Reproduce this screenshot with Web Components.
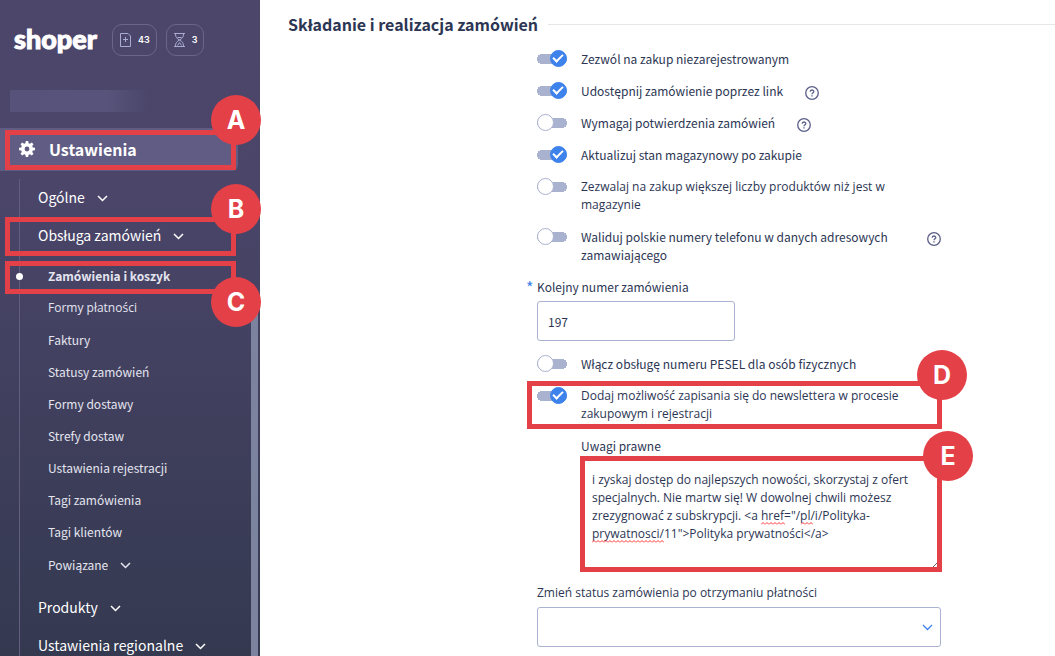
<!DOCTYPE html>
<html lang="pl">
<head>
<meta charset="utf-8">
<title>Składanie i realizacja zamówień</title>
<style>
  body { margin: 0; font-family: "Noto Sans CJK SC", "Noto Sans", sans-serif; font-size: 12px; line-height: 18px; color: #2c3654; background: #fff; }
  .pl { font-family: "Open Sans", sans-serif; }
</style>
</head>
<body>
<app-shell>
  <side-bar slot="side">
    <callout-mark letter="A" style="--frame: 2px 2px 1px 5px; --badge-top: -40px">
      <nav-item level="0">Ustawienia</nav-item>
    </callout-mark>
    <nav-tree>
      <nav-item level="1" expandable>Ogólne</nav-item>
      <callout-mark letter="B" style="--frame: 1px 2px -2px 5px; --badge-top: -38px">
        <nav-item level="1" expandable>Obsługa zamówień</nav-item>
      </callout-mark>
      <nav-group>
        <callout-mark letter="C" style="--frame: 1px 2px -2px 5px; --badge-top: 11px">
          <nav-item level="2" current>Zamówienia i koszyk</nav-item>
        </callout-mark>
        <nav-item class="pl" level="2">Formy płatności</nav-item>
        <nav-item level="2">Faktury</nav-item>
        <nav-item level="2">Statusy zamówień</nav-item>
        <nav-item level="2">Formy dostawy</nav-item>
        <nav-item level="2">Strefy dostaw</nav-item>
        <nav-item level="2">Ustawienia rejestracji</nav-item>
        <nav-item level="2">Tagi zamówienia</nav-item>
        <nav-item level="2">Tagi klientów</nav-item>
        <nav-item level="2" expandable>Powiązane</nav-item>
      </nav-group>
      <nav-item level="1" expandable>Produkty</nav-item>
      <nav-item level="1" expandable>Ustawienia regionalne</nav-item>
    </nav-tree>
  </side-bar>
  <settings-section heading="Składanie i realizacja zamówień">
    <toggle-row checked>Zezwól na zakup niezarejestrowanym</toggle-row>
    <toggle-row checked help>Udostępnij zamówienie poprzez link</toggle-row>
    <toggle-row help>Wymagaj potwierdzenia zamówień</toggle-row>
    <toggle-row checked>Aktualizuj stan magazynowy po zakupie</toggle-row>
    <toggle-row class="pl">Zezwalaj na zakup większej liczby produktów niż jest w magazynie</toggle-row>
    <toggle-row help>Waliduj polskie numery telefonu w danych adresowych zamawiającego</toggle-row>
    <text-field value="197" required>Kolejny numer zamówienia</text-field>
    <toggle-row>Włącz obsługę numeru PESEL dla osób fizycznych</toggle-row>
    <callout-mark letter="D" style="--frame: -6px -1px -6px -10px; --badge-top: -36px">
      <toggle-row class="pl" checked>Dodaj możliwość zapisania się do newslettera w procesie zakupowym i rejestracji</toggle-row>
    </callout-mark>
    <note-field>Uwagi prawne</note-field>
    <select-field class="pl">Zmień status zamówienia po otrzymaniu płatności</select-field>
  </settings-section>
</app-shell>

<script>
const define = (name, css, render) => customElements.define(name, class extends HTMLElement {
  constructor() {
    super();
    this.attachShadow({ mode: "open" });
  }
  connectedCallback() {
    if (this.shadowRoot.childNodes.length) return;
    const t = document.createElement("template");
    t.innerHTML = `<style>*{box-sizing:border-box}${css}</style>${render(this)}`;
    this.shadowRoot.append(t.content.cloneNode(true));
  }
});

define("app-shell", `
  :host { display: grid; grid-template-columns: 260px minmax(0, 1fr); height: 100vh; overflow: hidden; }
  aside, main { min-width: 0; min-height: 0; }
  aside { position: relative; z-index: 1; }
  main { overflow: hidden; }
`, () => `<aside><slot name="side"></slot></aside><main><slot></slot></main>`);

define("side-bar", `
  :host { display: block; position: relative; height: 100vh; color: #fff;
    background: linear-gradient(#4c466b, #4a4569 30%, #343950); }
  header { display: flex; align-items: center; height: 56px; padding: 24px 0 0 14px; }
  .logo { font: 900 27px/32px Lato, sans-serif; color: #fff; text-decoration: none; flex: 0 0 98px; padding-bottom: 2px; -webkit-text-stroke: 1px #fff; }
  .pill { display: flex; align-items: center; gap: 6px; height: 32px; padding: 0 6px; margin-right: 9px;
    border: 1px solid #6b6688; border-radius: 10px; background: none; color: #fff; font: 600 9px/14px Inter, sans-serif; }
  .pill svg { width: 13px; height: 14px; fill: none; stroke: #a9abd0; }
  .shop { height: 22px; width: 138px; margin: 34px 0 16px 10px;
    background: linear-gradient(90deg, #57527a, #57537a 70%, #4b466a00); }
  .wrap { height: 100vh; clip-path: inset(0 -10px 0 0); }
  .bar { position: absolute; right: 2px; top: 300px; bottom: 0; width: 7px; background: #7b839f; }
`, () => `<div class="wrap"><header>
    <a class="logo" href="#">shoper</a>
    <button class="pill" aria-label="Nowe zamówienia"><svg viewBox="0 0 13 14"><path d="M1.500 .5h7.500l2.500 2.500v10.500h-10z"/><path d="M6.500 4v5M4 6.500h5"/></svg>43</button>
    <button class="pill" aria-label="Oczekujące"><svg viewBox="0 0 13 14"><path d="M1 .5h11M1 13.500h11M2.500 1c0 3.500 1.500 4.500 4 6c-2.500 1.500-4 2.500-4 6M10.500 1c0 3.500-1.500 4.500-4 6c2.500 1.500 4 2.500 4 6M4.500 12.500l2-3 2 3M4.500 4.500h4"/></svg>3</button>
  </header>
  <div class="shop"></div>
  <div class="bar"></div>
  <nav><slot></slot></nav></div>`);

define("nav-tree", `
  :host { display: block; position: relative; padding-top: 7px; }
  .line { position: absolute; left: 19px; top: 8px; bottom: 0; width: 1px; background: #625e7f; }
`, () => `<div class="line"></div><slot></slot>`);

define("nav-group", `:host { display: block; padding: 6px 0 7px; }`, () => `<slot></slot>`);

define("nav-item", `
  :host { display: block; width: 238px; }
  a { display: flex; align-items: center; gap: 12px; position: relative; color: #fff; text-decoration: none; white-space: nowrap; }
  .l0 { height: 43px; padding: 0 0 2px 19px; gap: 14px; font-size: 16px; font-weight: 700; background: #615c83; border-radius: 0 6px 6px 0; }
  .l1 { height: 38px; padding-left: 38px; font-size: 14px; }
  .l2 { height: 32px; padding-left: 48px; font-size: 12px; color: #e4e5ef; }
  .l2.current { font-weight: 700; }
  .l2.exp { height: 33px; }
  .l2.current::before { content: ""; position: absolute; left: 16px; width: 7px; height: 7px; border-radius: 50%; background: #fff; }
  .chev { width: 11px; height: 7px; fill: none; stroke: currentColor; stroke-width: 1.500; margin-top: 2px; }
  .gear { width: 16px; height: 16px; fill: #fff; }
`, el => {
  const level = el.getAttribute("level");
  const gear = `<svg class="gear" viewBox="0 0 16 16"><path fill-rule="evenodd" d="M6.800 0h2.400l.4 2.200 1.300.6 1.900-1.300 1.700 1.700-1.300 1.900.6 1.300 2.200.4v2.400l-2.200.4-.6 1.300 1.300 1.900-1.700 1.700-1.900-1.300-1.300.6-.4 2.200H6.800l-.4-2.200-1.300-.6-1.900 1.300-1.700-1.700 1.300-1.900-.6-1.300L0 9.200V6.800l2.200-.4.6-1.300L1.500 3.200l1.700-1.700 1.900 1.300 1.300-.6zM8 5.600a2.400 2.400 0 1 0 0 4.800a2.400 2.400 0 0 0 0-4.800z"/></svg>`;
  const chev = `<svg class="chev" viewBox="0 0 11 7"><path d="M1 1l4.500 4.500L10 1"/></svg>`;
  const exp = el.hasAttribute("expandable"), cur = el.hasAttribute("current");
  return `<a href="#" class="l${level}${exp ? " exp" : ""}${cur ? " current" : ""}">${level === "0" ? gear : ""}<span><slot></slot></span>${exp ? chev : ""}</a>`;
});

define("callout-mark", `
  :host { display: block; position: relative; }
  .frame { position: absolute; inset: var(--frame); border: 5px solid #e34047; pointer-events: none; z-index: 2; }
  .badge { position: absolute; top: var(--badge-top); right: var(--badge-right, -30px); width: 50px; height: 50px; border-radius: 50%;
    background: #e34047; color: #fff; font: 700 25px/50px Inter, sans-serif; text-align: center; }
  :host-context(side-bar) { width: 238px; }
`, el => `<slot></slot><div class="frame"><span class="badge">${el.getAttribute("letter")}</span></div>`);

define("settings-section", `
  :host { display: block; padding: 14px 0 0 28px; }
  h2 { display: flex; align-items: center; gap: 10px; margin: 0 0 16px; font-size: 16px; line-height: 20px; font-weight: 700; }
  h2::after { content: ""; flex: 1; height: 1px; background: #e6e7ea; }
  .fields { display: grid; gap: 14px; margin-left: 249px; max-width: 404px; }
`, el => `<h2>${el.getAttribute("heading")}</h2><div class="fields"><slot></slot></div>`);

define("toggle-row", `
  :host { display: flex; align-items: flex-start; gap: 22px; }
  label { display: flex; gap: 14px; min-width: 0; }
  input { appearance: none; position: relative; flex: none; width: 30px; height: 17px; margin: 0;
    background: radial-gradient(circle, #a9b2ce 5px, #a9b2ce00 5px) 0 4px / 10px 10px no-repeat,
      radial-gradient(circle, #a9b2ce 5px, #a9b2ce00 5px) 20px 4px / 10px 10px no-repeat,
      linear-gradient(#a9b2ce, #a9b2ce) 5px 4px / 20px 10px no-repeat; }
  input::before { content: ""; position: absolute; box-sizing: border-box; left: 0; top: 0; width: 17px; height: 17px; border-radius: 50%; background: #fff; border: 1px solid #a9b2ce; }
  input:checked::before { left: 13px; background: #3e82ec; border-color: #3e82ec; }
  input:checked::after { content: ""; position: absolute; box-sizing: content-box; left: 16px; top: 4px; width: 8px; height: 4px; border: solid #fff; border-width: 0 0 2px 2px; transform: rotate(-45deg); }
  button { flex: none; width: 14px; height: 14px; padding: 0; margin: 4px 0 0; border: 0; background: none; }
  svg { display: block; width: 14px; height: 14px; fill: none; stroke: #5b5f88; }
`, el => `<label><input type="checkbox"${el.hasAttribute("checked") ? " checked" : ""}><span><slot></slot></span></label>${
  el.hasAttribute("help") ? `<button aria-label="Pomoc"><svg viewBox="0 0 14 14"><circle cx="7" cy="7" r="6.300" stroke-width="1.300"/><path stroke-width="1.300" d="M5.200 5.800c0-2.400 3.600-2.300 3.600-.2c0 1.200-1.800 1.200-1.800 2.600M7 9.300v1.300"/></svg></button>` : ""}`);

const fieldCss = `
  :host { display: block; position: relative; }
  label { display: block; margin-bottom: 5px; }
  input, textarea, select { display: block; margin: 0; font: inherit; color: inherit; background: #fff; border: 1px solid #a9b2d0; border-radius: 3px; outline: 0; }
`;

define("text-field", fieldCss + `
  input { width: 198px; height: 40px; padding: 0 10px; }
  label::before { content: "*"; position: absolute; left: -11px; color: #3e82ec; font-size: 16px; }
`, el => `<label for="f"><slot></slot></label><input id="f" value="${el.getAttribute("value")}" required>`);

define("note-field", fieldCss + `
  :host { margin-left: 44px; }
  textarea { width: 100%; height: 110px; padding: 10px 10px 8px; resize: vertical; font-family: "Open Sans", sans-serif; }
  .wave { position: absolute; height: 3px; background: url("data:image/svg+xml,%3Csvg xmlns='http://www.w3.org/2000/svg' width='4' height='3'%3E%3Cpath d='M0 2.500L2 .5L4 2.500' fill='none' stroke='%23f33'/%3E%3C/svg%3E") repeat-x; }
`, () => `<label for="n"><slot></slot></label>
  <callout-mark letter="E" style="--frame: -4px -1px -2px -1px; --badge-top: -30px; --badge-right: -36px"><textarea id="n" spellcheck="false">i zyskaj dostęp do najlepszych nowości, skorzystaj z ofert specjalnych. Nie martw się! W dowolnej chwili możesz zrezygnować z subskrypcji. &lt;a href="/pl/i/Polityka-prywatnosci/11"&gt;Polityka prywatności&lt;/a&gt;</textarea>
  <i class="wave" style="left:180px;top:62px;width:24px"></i><i class="wave" style="left:220px;top:62px;width:12px"></i><i class="wave" style="left:11px;top:80px;width:72px"></i></callout-mark>`);

define("select-field", fieldCss + `
  select { appearance: none; width: 100%; height: 40px; padding: 0 10px; }
  svg { position: absolute; right: 8px; bottom: 16px; width: 11px; height: 7px; fill: none; stroke: #3e82ec; stroke-width: 1.300; pointer-events: none; }
`, () => `<label for="s"><slot></slot></label><select id="s"><option></option></select><svg viewBox="0 0 11 7"><path d="M1 1l4.500 4.500L10 1"/></svg>`);
</script>
</body>
</html>
